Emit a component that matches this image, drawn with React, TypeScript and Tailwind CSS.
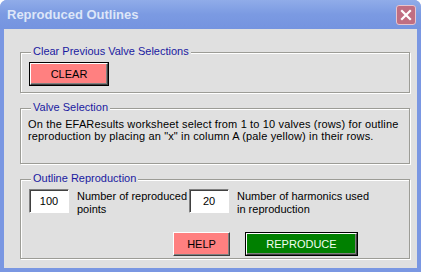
import React from "react";

const raised =
  "border border-t-white border-l-white border-b-[#404040] border-r-[#404040] shadow-[inset_-1px_-1px_0_#808080]";

function Group({
  label,
  height,
  className = "",
  children,
}: {
  label: string;
  height: string;
  className?: string;
  children?: React.ReactNode;
}) {
  return (
    <div
      className={`relative w-[390px] ${height} border border-[#9c9c96] shadow-[inset_1px_1px_0_#ffffff,1px_1px_0_#ffffff] ${className}`}
    >
      <span className="absolute left-[10px] top-[-8px] bg-[#e0e0e0] px-[2px] text-[11px] leading-[13px] text-[#1a1aa0]">
        {label}
      </span>
      {children}
    </div>
  );
}

export default function App() {
  return (
    <div
      className="w-[421px] h-[272px] bg-[#7a97e2] rounded-t-[7px] flex flex-col overflow-hidden"
      style={{ fontFamily: "'Liberation Sans', Arial, sans-serif" }}
    >
      <div className="h-[29px] flex items-center justify-between pl-[7px] pr-[5px] bg-gradient-to-b from-[#90ace9] via-[#7b9ae2] to-[#7594e0]">
        <span className="text-[13px] font-bold text-[#dde6f8]">
          Reproduced Outlines
        </span>
        <div className="w-[20px] h-[20px] rounded-[3px] bg-[#c06e82] border border-[#e8c4cc] flex items-center justify-center">
          <svg width="12" height="12" viewBox="0 0 12 12">
            <path d="M2 2 L10 10 M10 2 L2 10" stroke="#ffffff" strokeWidth="2.2" strokeLinecap="square" />
          </svg>
        </div>
      </div>
      <div className="flex-1 mx-[4px] mb-[4px] bg-[#e0e0e0] flex flex-col pl-[16px] pt-[23px]">
        <Group label="Clear Previous Valve Selections" height="h-[41px]">
          <div className="pl-[8px] pt-[8px]">
            <button className="w-[80px] h-[24px] border border-black bg-[#ff8080] p-0">
              <div className={`w-full h-full ${raised} flex items-center justify-center text-[11px] text-black`}>
                CLEAR
              </div>
            </button>
          </div>
        </Group>
        <Group label="Valve Selection" height="h-[56px]" className="mt-[15px]">
          <p className="pl-[7px] pt-[9px] text-[11px] leading-[12px] tracking-[0.15px] text-black">
            On the EFAResults worksheet select from 1 to 10 valves (rows) for outline
            <br />
            reproduction by placing an "x" in column A (pale yellow) in their rows.
          </p>
        </Group>
        <Group label="Outline Reproduction" height="h-[80px]" className="mt-[15px]">
          <div className="flex flex-col pl-[8px] pt-[9px]">
            <div className="flex items-start">
              <div className="w-[40px] h-[24px] bg-white border border-t-[#808080] border-l-[#808080] border-b-white border-r-white shadow-[inset_1px_1px_0_#404040] flex items-center justify-center text-[11px] text-black">
                100
              </div>
              <div className="w-[120px] pl-[8px] pt-[1px] text-[11px] leading-[13px] text-black">
                Number of reproduced
                <br />
                points
              </div>
              <div className="w-[40px] h-[24px] bg-white border border-t-[#808080] border-l-[#808080] border-b-white border-r-white shadow-[inset_1px_1px_0_#404040] flex items-center justify-center text-[11px] text-black">
                20
              </div>
              <div className="pl-[8px] pt-[1px] text-[11px] leading-[13px] text-black">
                Number of harmonics used
                <br />
                in reproduction
              </div>
            </div>
            <div className="flex mt-[16px] pl-[144px] gap-[15px]">
              <div className={`w-[57px] h-[24px] bg-[#ff8080] ${raised} flex items-center justify-center text-[11px] text-black`}>
                HELP
              </div>
              <button className="w-[113px] h-[24px] border border-black bg-[#008000] p-0">
                <div className={`w-full h-full ${raised} flex items-center justify-center text-[11px] text-[#f0fff0]`}>
                  REPRODUCE
                </div>
              </button>
            </div>
          </div>
        </Group>
      </div>
    </div>
  );
}
